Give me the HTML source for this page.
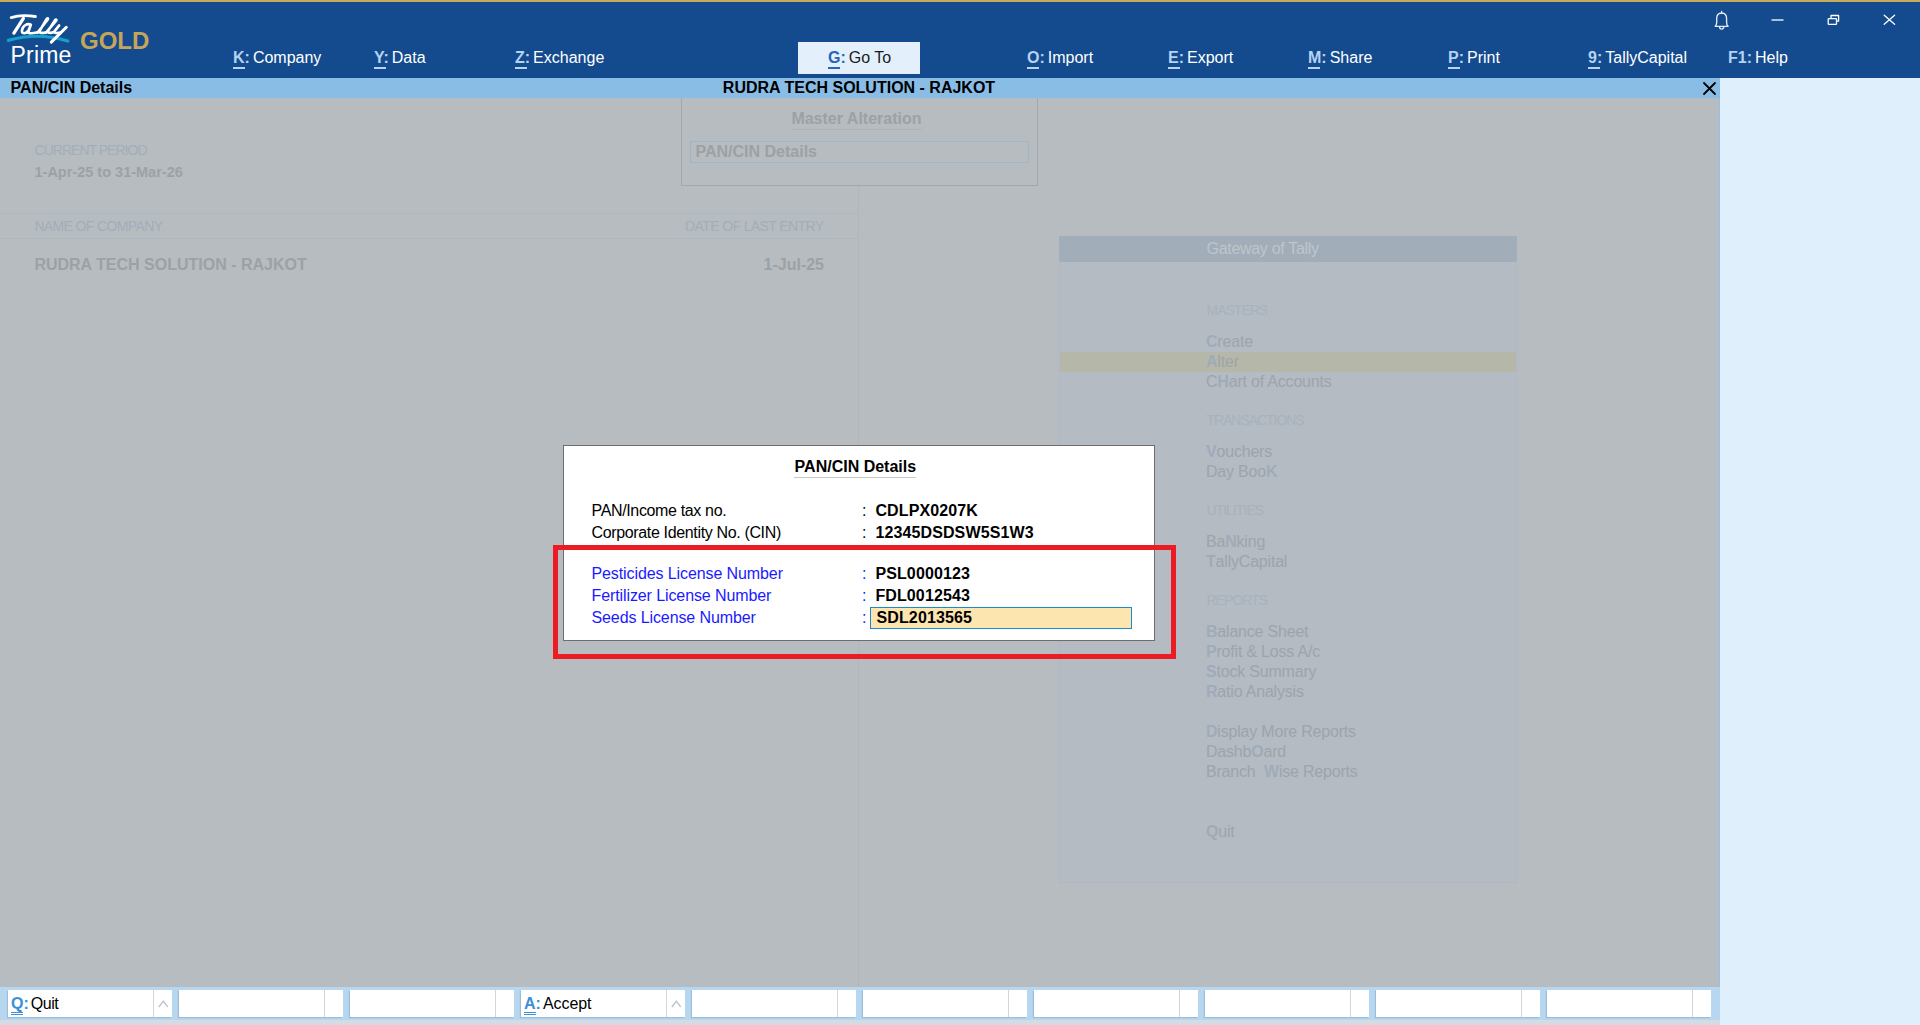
<!DOCTYPE html>
<html><head><meta charset="utf-8"><style>
*{margin:0;padding:0}
html,body{width:1920px;height:1025px;overflow:hidden;background:#b8bcc0;font-family:"Liberation Sans",sans-serif}
.t{position:absolute;line-height:1;white-space:pre}
.r{position:absolute}
.k{font-weight:bold;position:relative}
.ul{position:absolute;left:0;width:12px;height:1.5px;top:18px}
.k2{font-weight:bold;position:relative;color:#3a8fd8}
.ul2{position:absolute;left:0;width:12px;height:1px;top:17px;background:#3a8fd8;box-shadow:0 2px 0 #3a8fd8}
</style></head>
<body>
<div class="r" style="left:0px;top:0px;width:1920px;height:2px;background:#c8aa5c;"></div>
<div class="r" style="left:0px;top:2px;width:1920px;height:76px;background:#144b8f;"></div>
<svg class="r" style="left:0;top:0" width="160" height="78" viewBox="0 0 160 78">
<path d="M8.3 40.4 Q37.8 31.8 67.8 41" stroke="#16a2c8" stroke-width="3.2" fill="none" stroke-linecap="round"/>
<g stroke="#fff" fill="none" stroke-linecap="round" stroke-linejoin="round">
<path d="M11.2 17.6 C18 15.2 28 15.3 35.4 16.5" stroke-width="2.8"/>
<path d="M23.4 18.4 L13.9 33.1" stroke-width="3.3"/>
<path d="M30.8 24.8 C27.5 22.6 22.2 26.2 21.9 30.8 C21.7 34.4 26.2 33.8 28.6 30.2 L30.9 24.6 L28.2 32.6 C30 34 34 33.2 37.6 32.2" stroke-width="2.6"/>
<path d="M37.4 32.8 L47.6 19.8 C48.6 18.4 47.6 17.8 46.6 19 L39.4 31.4 C39 33.2 42.4 33.2 45.8 32.4" stroke-width="2.6"/>
<path d="M45.8 32.8 L56 20.8 C57 19.6 56 19 55 20.2 L47.8 31.4 C47.6 33.2 51 33.2 54 32" stroke-width="2.6"/>
<path d="M59.2 25.4 L54.4 31.4 C53.8 33.2 57.5 33.4 60.4 32.6" stroke-width="2.6"/>
<path d="M66.3 27.3 L51.3 42.1" stroke-width="3"/>
</g>
</svg>
<div class="t" style="left:10.5px;top:44.00px;font-size:23px;color:#fff;letter-spacing:0.2px;">Prime</div>
<div class="t" style="left:80px;top:29.00px;font-size:24px;color:#c5a55a;font-weight:bold;">GOLD</div>
<div class="r" style="left:798px;top:42px;width:122px;height:32px;background:#e3f0fb;"></div>
<div class="t" style="left:233px;top:50.00px;font-size:16px;color:#ffffff"><span class="k" style="color:#b5d3f2">K:<span class="ul" style="background:#b5d3f2"></span></span><span style="margin-left:3px">Company</span></div>
<div class="t" style="left:374px;top:50.00px;font-size:16px;color:#ffffff"><span class="k" style="color:#b5d3f2">Y:<span class="ul" style="background:#b5d3f2"></span></span><span style="margin-left:3px">Data</span></div>
<div class="t" style="left:515px;top:50.00px;font-size:16px;color:#ffffff"><span class="k" style="color:#b5d3f2">Z:<span class="ul" style="background:#b5d3f2"></span></span><span style="margin-left:3px">Exchange</span></div>
<div class="t" style="left:828px;top:50.00px;font-size:16px;color:#1b1b1b"><span class="k" style="color:#2a66b5">G:<span class="ul" style="background:#2a66b5"></span></span><span style="margin-left:3px">Go To</span></div>
<div class="t" style="left:1027px;top:50.00px;font-size:16px;color:#ffffff"><span class="k" style="color:#b5d3f2">O:<span class="ul" style="background:#b5d3f2"></span></span><span style="margin-left:3px">Import</span></div>
<div class="t" style="left:1168px;top:50.00px;font-size:16px;color:#ffffff"><span class="k" style="color:#b5d3f2">E:<span class="ul" style="background:#b5d3f2"></span></span><span style="margin-left:3px">Export</span></div>
<div class="t" style="left:1308px;top:50.00px;font-size:16px;color:#ffffff"><span class="k" style="color:#b5d3f2">M:<span class="ul" style="background:#b5d3f2"></span></span><span style="margin-left:3px">Share</span></div>
<div class="t" style="left:1448px;top:50.00px;font-size:16px;color:#ffffff"><span class="k" style="color:#b5d3f2">P:<span class="ul" style="background:#b5d3f2"></span></span><span style="margin-left:3px">Print</span></div>
<div class="t" style="left:1588px;top:50.00px;font-size:16px;color:#ffffff"><span class="k" style="color:#b5d3f2">9:<span class="ul" style="background:#b5d3f2"></span></span><span style="margin-left:3px">TallyCapital</span></div>
<div class="t" style="left:1728px;top:50.00px;font-size:16px;color:#ffffff"><span class="k" style="color:#b5d3f2">F1:</span><span style="margin-left:3px">Help</span></div>
<svg class="r" style="left:1700;top:0;left:1700px" width="220" height="40" viewBox="1700 0 220 40">
<path d="M1715.2 26.3 L1728.1 26.3 Q1726.6 25 1726.6 22.5 L1726.6 18.6 Q1726.6 13.2 1721.65 13 Q1716.7 13.2 1716.7 18.6 L1716.7 22.5 Q1716.7 25 1715.2 26.3 Z M1721.65 11.4 L1721.65 12.6 M1719.6 27 A2.05 2.05 0 0 0 1723.7 27" stroke="#e4ebf4" stroke-width="1.35" fill="none" stroke-linecap="round" stroke-linejoin="round"/>
<path d="M1771.5 20 L1783.5 20" stroke="#fff" stroke-width="1.3"/>
<rect x="1828.2" y="18.7" width="8.3" height="5.6" rx="0.6" stroke="#fff" stroke-width="1.3" fill="none"/>
<path d="M1831 18.7 L1831 15.5 L1838.6 15.5 L1838.6 21.1 L1836.5 21.1" stroke="#fff" stroke-width="1.3" fill="none" stroke-linejoin="round"/>
<path d="M1884.2 15.2 L1894.6 24.3 M1894.6 15.2 L1884.2 24.3" stroke="#fff" stroke-width="1.3" stroke-linecap="round"/>
</svg>
<div class="r" style="left:0px;top:78px;width:1720px;height:20px;background:#8abde6;"></div>
<div class="t" style="left:10.6px;top:80.00px;font-size:16px;color:#000;font-weight:bold;">PAN/CIN Details</div>
<div class="t" style="left:859px;transform:translateX(-50%);top:80.00px;font-size:16px;color:#000;font-weight:bold;">RUDRA TECH SOLUTION - RAJKOT</div>
<svg class="r" style="left:1700px;top:78px" width="20" height="20" viewBox="0 0 20 20"><path d="M4 5 L15 16 M15 5 L4 16" stroke="#000" stroke-width="1.8" stroke-linecap="round"/></svg>
<div class="r" style="left:0px;top:98px;width:1719px;height:889px;background:#b7bcc0;"></div>
<div class="r" style="left:1719px;top:98px;width:1px;height:927px;background:#8fc0e8;"></div>
<div class="r" style="left:1720px;top:78px;width:200px;height:947px;background:#dfeffc;"></div>
<div class="t" style="left:34.5px;top:143.00px;font-size:14px;color:#a2aebb;letter-spacing:-0.98px;">CURRENT PERIOD</div>
<div class="t" style="left:34.5px;top:165.00px;font-size:14.5px;color:#9ca1a6;font-weight:bold;">1-Apr-25 to 31-Mar-26</div>
<div class="r" style="left:0px;top:213px;width:858px;height:1px;background:#aab8c4;"></div>
<div class="t" style="left:34.4px;top:219.00px;font-size:14px;color:#a2aebb;letter-spacing:-0.63px;">NAME OF COMPANY</div>
<div class="t" style="right:1096.6px;top:219.00px;font-size:14px;color:#a2aebb;letter-spacing:-0.61px;">DATE OF LAST ENTRY</div>
<div class="r" style="left:0px;top:238px;width:858px;height:1px;background:#aab8c4;"></div>
<div class="t" style="left:34.4px;top:257.00px;font-size:16px;color:#9ca1a6;font-weight:bold;">RUDRA TECH SOLUTION - RAJKOT</div>
<div class="t" style="right:1096px;top:257.00px;font-size:16px;color:#9ca1a6;font-weight:bold;">1-Jul-25</div>
<div class="r" style="left:858px;top:185px;width:1px;height:802px;background:#b1b6ba;"></div>
<div class="r" style="left:681px;top:98px;width:357px;height:88px;border:1px solid #a3a8ad;box-sizing:border-box;border-top:none;"></div>
<div class="t" style="left:791.4px;top:111.00px;font-size:16px;color:#9ca1a6;font-weight:bold;">Master Alteration</div>
<div class="r" style="left:791px;top:129px;width:131px;height:1px;background:#aeb3b8;"></div>
<div class="r" style="left:690px;top:141px;width:339px;height:22px;border:1px solid #a0b6c6;box-sizing:border-box;"></div>
<div class="t" style="left:695.5px;top:144.00px;font-size:16px;color:#9ca1a6;font-weight:bold;">PAN/CIN Details</div>
<div class="r" style="left:1059px;top:236px;width:458px;height:647px;background:#b4bbc3;border:1px solid #adb8c2;box-sizing:border-box;"></div>
<div class="r" style="left:1059px;top:236px;width:458px;height:26px;background:#a1adb9;"></div>
<div class="t" style="left:1206.5px;top:241.00px;font-size:16px;color:#bfc5cb;letter-spacing:-0.3px;">Gateway of Tally</div>
<div class="r" style="left:1060px;top:352px;width:456px;height:20px;background:#b5b8a8;"></div>
<div class="t" style="left:1206.5px;top:303.00px;font-size:14px;color:#a7b2bd;letter-spacing:-1px;">MASTERS</div>
<div class="t" style="left:1206px;top:334.00px;font-size:16px;color:#9ea4aa;letter-spacing:-0.2px"><b style="color:#9fabb8">C</b>reate</div>
<div class="t" style="left:1206px;top:354.00px;font-size:16px;color:#9ea4aa;letter-spacing:-0.2px"><b style="color:#9fabb8">A</b>lter</div>
<div class="t" style="left:1206px;top:374.00px;font-size:16px;color:#9ea4aa;letter-spacing:-0.2px">C<b style="color:#9fabb8">H</b>art of Accounts</div>
<div class="t" style="left:1206.5px;top:413.00px;font-size:14px;color:#a7b2bd;letter-spacing:-1.05px;">TRANSACTIONS</div>
<div class="t" style="left:1206px;top:444.00px;font-size:16px;color:#9ea4aa;letter-spacing:-0.2px"><b style="color:#9fabb8">V</b>ouchers</div>
<div class="t" style="left:1206px;top:464.00px;font-size:16px;color:#9ea4aa;letter-spacing:-0.2px">Day Boo<b style="color:#9fabb8">K</b></div>
<div class="t" style="left:1206.5px;top:503.00px;font-size:14px;color:#a7b2bd;letter-spacing:-1px;">UTILITIES</div>
<div class="t" style="left:1206px;top:534.00px;font-size:16px;color:#9ea4aa;letter-spacing:-0.2px">Ba<b style="color:#9fabb8">N</b>king</div>
<div class="t" style="left:1206px;top:554.00px;font-size:16px;color:#9ea4aa;letter-spacing:-0.2px"><b style="color:#9fabb8">T</b>allyCapital</div>
<div class="t" style="left:1206.5px;top:593.00px;font-size:14px;color:#a7b2bd;letter-spacing:-1px;">REPORTS</div>
<div class="t" style="left:1206px;top:624.00px;font-size:16px;color:#9ea4aa;letter-spacing:-0.2px"><b style="color:#9fabb8">B</b>alance Sheet</div>
<div class="t" style="left:1206px;top:644.00px;font-size:16px;color:#9ea4aa;letter-spacing:-0.2px"><b style="color:#9fabb8">P</b>rofit &amp; Loss A/c</div>
<div class="t" style="left:1206px;top:664.00px;font-size:16px;color:#9ea4aa;letter-spacing:-0.2px"><b style="color:#9fabb8">S</b>tock Summary</div>
<div class="t" style="left:1206px;top:684.00px;font-size:16px;color:#9ea4aa;letter-spacing:-0.2px"><b style="color:#9fabb8">R</b>atio Analysis</div>
<div class="t" style="left:1206px;top:724.00px;font-size:16px;color:#9ea4aa;letter-spacing:-0.2px"><b style="color:#9fabb8">D</b>isplay More Reports</div>
<div class="t" style="left:1206px;top:744.00px;font-size:16px;color:#9ea4aa;letter-spacing:-0.2px">Dashb<b style="color:#9fabb8">O</b>ard</div>
<div class="t" style="left:1206px;top:764.00px;font-size:16px;color:#9ea4aa;letter-spacing:-0.2px">Branch&nbsp; <b style="color:#9fabb8">W</b>ise Reports</div>
<div class="t" style="left:1206px;top:824.00px;font-size:16px;color:#9ea4aa;letter-spacing:-0.2px"><b style="color:#9fabb8">Q</b>uit</div>
<div class="r" style="left:563px;top:445px;width:592px;height:196px;background:#fff;border:1px solid #6e6e6e;box-sizing:border-box;"></div>
<div class="t" style="left:794.6px;top:459.00px;font-size:16px;color:#000;font-weight:bold;">PAN/CIN Details</div>
<div class="r" style="left:794px;top:477px;width:122px;height:1px;background:#c8c8c8;"></div>
<div class="r" style="left:870px;top:607px;width:262px;height:22px;background:#fde5b0;border:1px solid #1b8ad0;box-sizing:border-box;"></div>
<div class="t" style="left:591.5px;top:503.00px;font-size:16px;color:#000;letter-spacing:-0.35px;">PAN/Income tax no.</div>
<div class="t" style="left:862px;top:503.00px;font-size:16px;color:#000;">:</div>
<div class="t" style="left:875.4px;top:503.00px;font-size:16px;color:#000;font-weight:bold;letter-spacing:0.12px;">CDLPX0207K</div>
<div class="t" style="left:591.5px;top:525.00px;font-size:16px;color:#000;letter-spacing:-0.35px;">Corporate Identity No. (CIN)</div>
<div class="t" style="left:862px;top:525.00px;font-size:16px;color:#000;">:</div>
<div class="t" style="left:875.4px;top:525.00px;font-size:16px;color:#000;font-weight:bold;letter-spacing:0.12px;">12345DSDSW5S1W3</div>
<div class="t" style="left:591.5px;top:566.00px;font-size:16px;color:#1a1aff;letter-spacing:-0.1px;">Pesticides License Number</div>
<div class="t" style="left:862px;top:566.00px;font-size:16px;color:#1a1aff;">:</div>
<div class="t" style="left:875.4px;top:566.00px;font-size:16px;color:#000;font-weight:bold;letter-spacing:0.12px;">PSL0000123</div>
<div class="t" style="left:591.5px;top:588.00px;font-size:16px;color:#1a1aff;letter-spacing:-0.1px;">Fertilizer License Number</div>
<div class="t" style="left:862px;top:588.00px;font-size:16px;color:#1a1aff;">:</div>
<div class="t" style="left:875.4px;top:588.00px;font-size:16px;color:#000;font-weight:bold;letter-spacing:0.12px;">FDL0012543</div>
<div class="t" style="left:591.5px;top:610.00px;font-size:16px;color:#1a1aff;letter-spacing:-0.1px;">Seeds License Number</div>
<div class="t" style="left:862px;top:610.00px;font-size:16px;color:#1a1aff;">:</div>
<div class="t" style="left:876.5px;top:610.00px;font-size:16px;color:#000;font-weight:bold;letter-spacing:0.12px;">SDL2013565</div>
<div class="r" style="left:553px;top:545px;width:623px;height:114px;border:5px solid #ec1c24;box-sizing:border-box;"></div>
<div class="r" style="left:0px;top:987px;width:1720px;height:33px;background:#b7d7f0;"></div>
<div class="r" style="left:0px;top:1020px;width:1720px;height:5px;background:#d5dbe3;"></div>
<div class="r" style="left:8px;top:990px;width:164px;height:27px;background:#fff;box-shadow:-1px 1px 1px rgba(80,110,140,0.25);"></div>
<div class="r" style="left:153px;top:990px;width:1px;height:27px;background:#d6d6d6;"></div>
<div class="r" style="left:179px;top:990px;width:164px;height:27px;background:#fff;box-shadow:-1px 1px 1px rgba(80,110,140,0.25);"></div>
<div class="r" style="left:324px;top:990px;width:1px;height:27px;background:#d6d6d6;"></div>
<div class="r" style="left:350px;top:990px;width:164px;height:27px;background:#fff;box-shadow:-1px 1px 1px rgba(80,110,140,0.25);"></div>
<div class="r" style="left:495px;top:990px;width:1px;height:27px;background:#d6d6d6;"></div>
<div class="r" style="left:521px;top:990px;width:164px;height:27px;background:#fff;box-shadow:-1px 1px 1px rgba(80,110,140,0.25);"></div>
<div class="r" style="left:666px;top:990px;width:1px;height:27px;background:#d6d6d6;"></div>
<div class="r" style="left:692px;top:990px;width:164px;height:27px;background:#fff;box-shadow:-1px 1px 1px rgba(80,110,140,0.25);"></div>
<div class="r" style="left:837px;top:990px;width:1px;height:27px;background:#d6d6d6;"></div>
<div class="r" style="left:863px;top:990px;width:164px;height:27px;background:#fff;box-shadow:-1px 1px 1px rgba(80,110,140,0.25);"></div>
<div class="r" style="left:1008px;top:990px;width:1px;height:27px;background:#d6d6d6;"></div>
<div class="r" style="left:1034px;top:990px;width:164px;height:27px;background:#fff;box-shadow:-1px 1px 1px rgba(80,110,140,0.25);"></div>
<div class="r" style="left:1179px;top:990px;width:1px;height:27px;background:#d6d6d6;"></div>
<div class="r" style="left:1205px;top:990px;width:164px;height:27px;background:#fff;box-shadow:-1px 1px 1px rgba(80,110,140,0.25);"></div>
<div class="r" style="left:1350px;top:990px;width:1px;height:27px;background:#d6d6d6;"></div>
<div class="r" style="left:1376px;top:990px;width:164px;height:27px;background:#fff;box-shadow:-1px 1px 1px rgba(80,110,140,0.25);"></div>
<div class="r" style="left:1521px;top:990px;width:1px;height:27px;background:#d6d6d6;"></div>
<div class="r" style="left:1547px;top:990px;width:164px;height:27px;background:#fff;box-shadow:-1px 1px 1px rgba(80,110,140,0.25);"></div>
<div class="r" style="left:1692px;top:990px;width:1px;height:27px;background:#d6d6d6;"></div>
<div class="t" style="left:11px;top:996.00px;font-size:16px;color:#000"><span class="k2">Q:<span class="ul2"></span></span><span style="margin-left:2px;letter-spacing:-0.5px">Quit</span></div>
<div class="t" style="left:524px;top:996.00px;font-size:16px;color:#000"><span class="k2">A:<span class="ul2"></span></span><span style="margin-left:2px;letter-spacing:-0.05px">Accept</span></div>
<svg class="r" style="left:157px;top:999px" width="14" height="10"><path d="M1.8 8 L6.3 2.2 L10.8 8" stroke="#c0c6cf" stroke-width="1.4" fill="none"/></svg>
<svg class="r" style="left:670px;top:999px" width="14" height="10"><path d="M1.8 8 L6.3 2.2 L10.8 8" stroke="#c0c6cf" stroke-width="1.4" fill="none"/></svg>
</body></html>
